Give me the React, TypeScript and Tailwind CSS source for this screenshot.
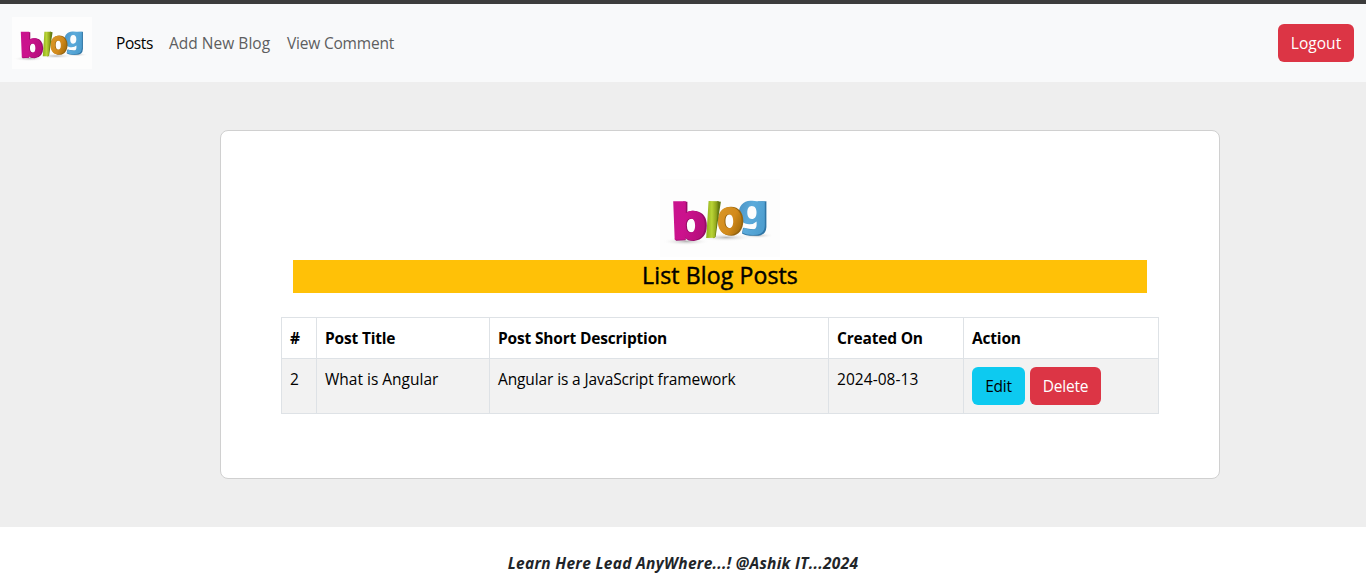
function BlogLogo({ className, id }: { className: string; id: string }) {
  const u = (n: string) => `url(#${id}-${n})`;
  return (
    <svg viewBox="0 0 120 78" preserveAspectRatio="none" className={className} role="img" aria-label="blog">
      <defs>
        <linearGradient id={`${id}-p`} x1="0" y1="0" x2="1" y2="0.3">
          <stop offset="0" stopColor="#c9148f" />
          <stop offset="0.5" stopColor="#cb128c" />
          <stop offset="1" stopColor="#b80f7e" />
        </linearGradient>
        <linearGradient id={`${id}-g`} x1="0" y1="0" x2="1" y2="0">
          <stop offset="0" stopColor="#8fae1c" />
          <stop offset="0.45" stopColor="#b9d436" />
          <stop offset="0.8" stopColor="#8fa51c" />
          <stop offset="1" stopColor="#647a10" />
        </linearGradient>
        <linearGradient id={`${id}-o`} x1="0" y1="0" x2="1" y2="0.5">
          <stop offset="0" stopColor="#d9982a" />
          <stop offset="0.7" stopColor="#d38a1b" />
          <stop offset="1" stopColor="#b0740f" />
        </linearGradient>
        <linearGradient id={`${id}-b`} x1="0" y1="0" x2="1" y2="0.4">
          <stop offset="0" stopColor="#4a92c4" />
          <stop offset="0.5" stopColor="#5cabdb" />
          <stop offset="1" stopColor="#4f9fd0" />
        </linearGradient>
        <radialGradient id={`${id}-s`}>
          <stop offset="0" stopColor="#9a9a9a" stopOpacity="0.7" />
          <stop offset="1" stopColor="#ffffff" stopOpacity="0" />
        </radialGradient>
      </defs>
      <rect width="120" height="78" fill="#fdfdfd" />
      <ellipse cx="26" cy="62.5" rx="24" ry="4" fill={u("s")} />
      <ellipse cx="66" cy="58.5" rx="27" ry="4" fill={u("s")} />
      <ellipse cx="97" cy="56.5" rx="17" ry="3" fill={u("s")} />
      <path fill="#2f75a5" d="M98 22.6L106.4 22.2V48Q106 56.8 96 56.8Q86 57.2 82 54.5L83 49L98 51Z" />
      <path
        fill={u("b")}
        fillRule="evenodd"
        d="M104.8 22.2H96.6Q94.5 21.5 90.5 21.7C83 22 78.8 27 78.8 34C78.8 41 83 45.3 89.5 45.3Q94 45.3 96.6 42.6V46Q96.5 50.5 92 50.5Q87 50.5 83.7 48.5L82.3 53.8Q87 56.3 93.5 56.1Q104.8 55.8 104.8 46.2ZM91.8 27.1C95.2 27.1 96.5 30 96.5 33.4C96.5 37.2 95 40 91.8 40C88.7 40 87.3 37.2 87.3 33.6C87.3 30 88.7 27.1 91.8 27.1Z"
      />
      <path
        fill="#95630f"
        fillRule="evenodd"
        d="M71 27.8C79 27.8 83.3 34 83.3 42C83.3 50 78.7 56.8 71.5 56.8C63 56.8 58.4 50.5 58.4 42.4C58.4 34.2 63 27.8 71 27.8ZM70 35.2C66.8 35.2 65.5 38.3 65.5 42.3C65.5 46.2 67 49.2 70 49.2C73 49.2 74.2 46.3 74.2 42.2C74.2 38.1 72.8 35.2 70 35.2Z"
      />
      <path
        fill={u("o")}
        fillRule="evenodd"
        d="M69.5 28C77.2 28 81.6 34 81.6 41.8C81.6 49.8 77 56 69.4 56C61.8 56 57.8 50 57.8 42.2C57.8 34 62.2 28 69.5 28ZM69 35.2C65.8 35.2 64.5 38.3 64.5 42.3C64.5 46.2 66 49.2 69 49.2C72 49.2 73.2 46.3 73.2 42.2C73.2 38.1 71.8 35.2 69 35.2Z"
      />
      <path fill="#657b12" d="M57 22.3L60.9 22.7L58.2 40L55.6 58L53 59.2Z" />
      <path fill={u("g")} d="M48.6 22L58.7 22.2L55 58.8L46.2 58.9Z" />
      <path
        fill="#970c68"
        fillRule="evenodd"
        d="M23 22.5L27.4 22.8V33Q31 31.2 36 32Q46.8 34 46.8 46.8Q46.6 60.5 34 61.9Q27 62 25.7 59V61.2L16 61.8L14.8 60ZM31.7 39.8Q26.9 40 26.9 46.5Q27 53.5 32 53.5Q35.9 53 35.9 46.8Q35.7 39.8 31.7 39.8Z"
      />
      <path
        fill={u("p")}
        fillRule="evenodd"
        d="M13.2 22.2H25.8V34.2Q28.6 31.6 33 31.8C40.5 32.2 44.8 37.8 44.8 46.3C44.8 55.2 40.2 61.2 32.6 61.2Q27.8 61.2 25.4 58.3V60.7H14.7ZM30.6 39.6C27.3 39.6 25.8 42.5 25.8 46.5C25.8 50.9 27.5 53.6 30.6 53.6C33.8 53.6 35.1 50.8 35.1 46.6C35.1 42.4 33.7 39.6 30.6 39.6Z"
      />
    </svg>
  );
}

const btn = "flex h-[38px] items-center justify-center rounded-md";
const cell = "border border-[#dee2e6] px-2 pt-2 align-top";

export default function App() {
  return (
    <div className="flex h-[578px] flex-col overflow-hidden bg-white font-['Open_Sans','Noto_Sans',sans-serif] text-[15.5px] leading-6 tracking-[-0.25px] text-black">
      <nav className="flex h-[82px] shrink-0 items-center border-t-4 border-[#3c3c3c] bg-[#f8f9fa] px-3">
        <BlogLogo id="nav" className="h-[52px] w-20" />
        <div className="ml-6 flex gap-4 whitespace-nowrap">
          <a className="w-[37px] tracking-[-0.4px]">Posts</a>
          <a className="w-[102px] tracking-[0.02px] text-[#5d5e5f]">Add New Blog</a>
          <a className="tracking-[-0.2px] text-[#5d5e5f]">View Comment</a>
        </div>
        <button className={`${btn} ml-auto w-[76px] bg-[#dc3545] tracking-[0.05px] text-white`}>Logout</button>
      </nav>

      <main className="h-[445px] shrink-0 bg-[#eeeeee] pt-12 pl-[220px]">
        <section className="h-[349px] w-[1000px] rounded-lg border border-[#d0d0d0] bg-white px-[60px] pt-12">
          <BlogLogo id="card" className="mx-auto h-[78px] w-[120px]" />
          <h4 className="mx-3 mt-[3px] h-[33px] bg-[#ffc107] text-center text-[23px] leading-[31px] font-medium tracking-[0.15px] [-webkit-text-stroke:0.45px_black]">
            List Blog Posts
          </h4>
          <table className="mt-6 w-[878px] table-fixed border-collapse text-left whitespace-nowrap">
            <colgroup>
              <col className="w-[35px]" />
              <col className="w-[173px]" />
              <col className="w-[339px]" />
              <col className="w-[135px]" />
              <col className="w-[195px]" />
            </colgroup>
            <thead>
              <tr className="h-[41px] font-bold tracking-[-0.18px]">
                <th className={cell}>#</th>
                <th className={cell}>Post Title</th>
                <th className={cell}>Post Short Description</th>
                <th className={cell}>Created On</th>
                <th className={cell}>Action</th>
              </tr>
            </thead>
            <tbody>
              <tr className="h-[55px] bg-[#f2f2f2]">
                <td className={cell}>2</td>
                <td className={`${cell} tracking-[0px]`}>What is Angular</td>
                <td className={`${cell} tracking-[-0.12px]`}>Angular is a JavaScript framework</td>
                <td className={`${cell} tracking-[0.05px]`}>2024-08-13</td>
                <td className={cell}>
                  <div className="flex gap-[5px]">
                    <button className={`${btn} w-[53px] bg-[#0dcaf0]`}>Edit</button>
                    <button className={`${btn} w-[71px] bg-[#dc3545] text-white`}>Delete</button>
                  </div>
                </td>
              </tr>
            </tbody>
          </table>
        </section>
      </main>

      <footer className="pt-6 text-center font-bold tracking-[0.3px] text-[#212529] italic">
        Learn Here Lead AnyWhere...! @Ashik IT...2024
      </footer>
    </div>
  );
}
